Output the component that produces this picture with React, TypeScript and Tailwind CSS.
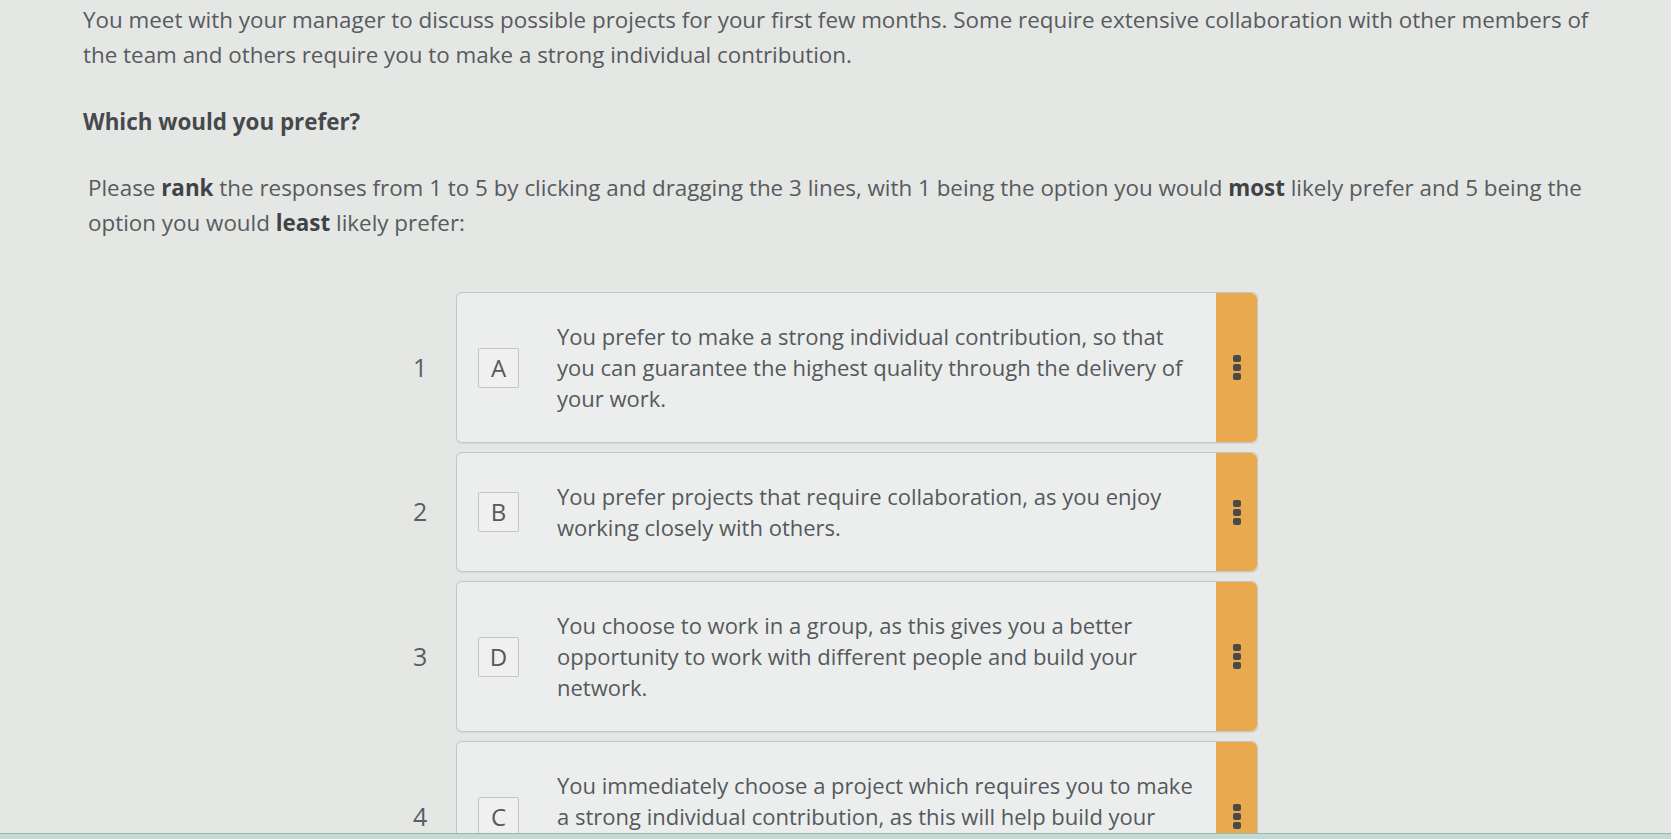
import React from "react";

type Item = { rank: number; letter: string; lines: string[] };

const items: Item[] = [
  {
    rank: 1,
    letter: "A",
    lines: [
      "You prefer to make a strong individual contribution, so that",
      "you can guarantee the highest quality through the delivery of",
      "your work.",
    ],
  },
  {
    rank: 2,
    letter: "B",
    lines: ["You prefer projects that require collaboration, as you enjoy", "working closely with others."],
  },
  {
    rank: 3,
    letter: "D",
    lines: [
      "You choose to work in a group, as this gives you a better",
      "opportunity to work with different people and build your",
      "network.",
    ],
  },
  {
    rank: 4,
    letter: "C",
    lines: [
      "You immediately choose a project which requires you to make",
      "a strong individual contribution, as this will help build your",
      "reputation.",
    ],
  },
];

const Handle: React.FC = () => (
  <div className="w-[41px] shrink-0 bg-[#e9a94f] rounded-r-md flex items-center justify-center">
    <div className="flex flex-col gap-[2px]">
      <span className="block w-[8px] h-[7px] rounded-[2px] bg-[#4b4846]" />
      <span className="block w-[8px] h-[7px] rounded-[2px] bg-[#4b4846]" />
      <span className="block w-[8px] h-[7px] rounded-[2px] bg-[#4b4846]" />
    </div>
  </div>
);

const RankRow: React.FC<{ item: Item }> = ({ item }) => (
  <div className="flex items-center">
    <div className="w-[43px] text-[25px] text-[#5a5e61]">{item.rank}</div>
    <div className="flex w-[802px] rounded-md border border-[#c4c6c5] bg-[#eceeed] shadow-[0_1px_1px_rgba(0,0,0,0.06)]">
      <div className="flex flex-1 items-center py-[28px] pl-[21px]">
        <div className="w-[41px] h-[40px] shrink-0 border border-[#c4c6c5] bg-[#eff0ef] rounded-[2px] flex items-center justify-center text-[24px] text-[#55595c]">
          {item.letter}
        </div>
        <p className="ml-[38px] text-[22px] leading-[31px] text-[#55595c]">
          {item.lines.map((l, i) => (
            <span key={i} className="block whitespace-nowrap">
              {l}
            </span>
          ))}
        </p>
      </div>
      <Handle />
    </div>
  </div>
);

const App: React.FC = () => {
  return (
    <div
      className="h-[839px] w-full overflow-hidden bg-[#e5e7e5] flex flex-col"
      style={{ fontFamily: '"Open Sans", "Liberation Sans", sans-serif' }}
    >
      <div className="flex-1 overflow-hidden">
        <div className="pl-[83px] pr-[40px] pt-[2px] text-[22.4px] leading-[35px] text-[#575b5e]">
          <p>
            You meet with your manager to discuss possible projects for your first few months. Some require extensive
            collaboration with other members of
            <br />
            the team and others require you to make a strong individual contribution.
          </p>
          <p className="mt-[32px] font-bold text-[#45494c]">Which would you prefer?</p>
          <p className="mt-[31px] pl-[5px]">
            Please <b className="text-[#3f4346]">rank</b> the responses from 1 to 5 by clicking and dragging the 3 lines,
            with 1 being the option you would <b className="text-[#3f4346]">most</b> likely prefer and 5 being the
            <br />
            option you would <b className="text-[#3f4346]">least</b> likely prefer:
          </p>
        </div>
        <div className="mt-[52px] pl-[413px] flex flex-col gap-[9px]">
          {items.map((it) => (
            <RankRow key={it.rank} item={it} />
          ))}
        </div>
      </div>
      <div className="h-[6px] bg-[#c3d9d4] border-t border-[#9fb3ae]" />
    </div>
  );
};

export default App;
